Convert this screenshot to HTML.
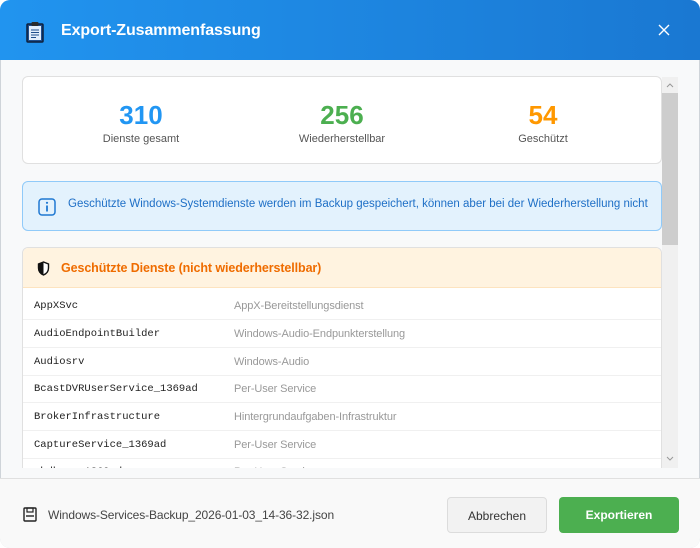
<!DOCTYPE html>
<html><head><meta charset="utf-8"><style>
*{box-sizing:border-box;margin:0;padding:0}
body{width:700px;height:548px;background:#fff;font-family:"Liberation Sans","DejaVu Sans",sans-serif;overflow:hidden}
.win{position:absolute;left:0;top:0;width:700px;height:548px;border-radius:10px;overflow:hidden;background:#f8f9fa;box-shadow:inset 0 0 0 1px #cfd4d9}
.hdr{position:absolute;left:0;top:0;width:700px;height:60px;background:linear-gradient(90deg,#2194ef,#1a78d2)}
.hdr h1{position:absolute;left:61px;top:22px;font-size:16px;font-weight:bold;color:#fff;letter-spacing:-0.1px}
.close{position:absolute;left:657px;top:23px}
.body{position:absolute;left:0;top:60px;width:700px;height:408px;overflow:hidden}
.card{position:absolute;left:22px;background:#fff;border:1px solid #e0e0e0;border-radius:6px}
.stat{position:absolute;top:23px;width:200px;text-align:center}
.stat b{display:block;font-size:26px;line-height:30px}
.stat span{display:block;font-size:11px;color:#555;margin-top:3px}
.info{position:absolute;left:22px;top:121px;width:640px;height:50px;background:#e3f2fd;border:1px solid #90caf9;border-radius:6px;overflow:hidden;white-space:nowrap}
.info span{position:absolute;left:45px;top:16px;font-size:11.5px;color:#1e6fc6;letter-spacing:0px}
.ph{position:absolute;left:0;top:0;width:640px;height:40px;background:#fff3e0;border-bottom:1px solid #fde3bf}
.ph span{position:absolute;left:38px;top:13px;font-size:12.5px;font-weight:bold;color:#ef6c00;letter-spacing:-0.1px}
.row{position:absolute;left:0;width:640px;height:28px;border-bottom:1px solid #f0f0f0}
.row .n{position:absolute;left:11px;top:8px;font-family:"Liberation Mono","DejaVu Sans Mono",monospace;font-size:10.5px;color:#222}
.row .d{position:absolute;left:211px;top:8px;font-size:11px;color:#999;letter-spacing:-0.1px}
.sb{position:absolute;left:662px;top:77px;width:16px;height:391px;background:#f0f0f0}
.foot{position:absolute;left:0;top:478px;width:700px;height:70px;background:#f9f9f9;border-top:1px solid #e0e0e0}
.fn{position:absolute;left:48px;top:29px;font-size:12px;color:#444;letter-spacing:-0.1px}
.btn{position:absolute;top:18px;height:36px;border-radius:4px;font-size:12px;text-align:center;line-height:36px}
</style></head><body><div class="win">
<div class="hdr">
<svg style="position:absolute;left:26px;top:21px" width="18" height="22" viewBox="0 0 18 22"><rect x="1" y="3" width="16" height="18" rx="1" fill="#1f4e8c" stroke="#0d1f3c" stroke-width="1.5"/><rect x="3" y="5" width="12" height="14" fill="#e3eefc"/><rect x="5.5" y="1" width="7" height="4" rx="1" fill="#2b2b2b"/><path d="M5 9h8M5 11.5h8M5 14h8M5 16.5h5" stroke="#1f4e8c" stroke-width="1"/></svg>
<h1>Export-Zusammenfassung</h1>
<svg class="close" width="14" height="14" viewBox="0 0 14 14"><path d="M2 2L12 12M12 2L2 12" stroke="#fff" stroke-width="1.4"/></svg>
</div>
<div class="body">
<div class="card" style="top:16px;width:640px;height:88px">
<div class="stat" style="left:18px"><b style="color:#2196f3">310</b><span>Dienste gesamt</span></div>
<div class="stat" style="left:219px"><b style="color:#4caf50">256</b><span>Wiederherstellbar</span></div>
<div class="stat" style="left:420px"><b style="color:#ff9800">54</b><span>Geschützt</span></div>
</div>
<div class="info"><svg style="position:absolute;left:15px;top:16px" width="18" height="18" viewBox="0 0 18 18"><rect x="1" y="1" width="16" height="16" rx="3" fill="none" stroke="#1e78d2" stroke-width="1.5"/><path d="M9 7.5v6" stroke="#1e78d2" stroke-width="1.8"/><circle cx="9" cy="4.8" r="1.1" fill="#1e78d2"/></svg><span>Geschützte Windows-Systemdienste werden im Backup gespeichert, können aber bei der Wiederherstellung nicht</span></div>
<div class="card" style="top:187px;width:640px;height:260px;overflow:hidden">
<div class="ph"><svg style="position:absolute;left:14px;top:13px" width="13" height="15" viewBox="0 0 13 15"><path d="M6.5 1L1.5 3v4c0 3.5 2.2 5.8 5 7 2.8-1.2 5-3.5 5-7V3z" fill="#fff" stroke="#111" stroke-width="1.4"/><path d="M6.5 1v13c-2.8-1.2-5-3.5-5-7V3z" fill="#111"/></svg><span>Geschützte Dienste (nicht wiederherstellbar)</span></div>
<div class="row" style="top:44px"><span class="n">AppXSvc</span><span class="d">AppX-Bereitstellungsdienst</span></div>
<div class="row" style="top:72px"><span class="n">AudioEndpointBuilder</span><span class="d">Windows-Audio-Endpunkterstellung</span></div>
<div class="row" style="top:100px"><span class="n">Audiosrv</span><span class="d">Windows-Audio</span></div>
<div class="row" style="top:127px"><span class="n">BcastDVRUserService_1369ad</span><span class="d">Per-User Service</span></div>
<div class="row" style="top:155px"><span class="n">BrokerInfrastructure</span><span class="d">Hintergrundaufgaben-Infrastruktur</span></div>
<div class="row" style="top:183px"><span class="n">CaptureService_1369ad</span><span class="d">Per-User Service</span></div>
<div class="row" style="top:210px"><span class="n">cbdhsvc_1369ad</span><span class="d">Per-User Service</span></div>
</div>
</div>
<div class="sb"><div style="position:absolute;left:0;top:16px;width:16px;height:152px;background:#cdcdcd"></div>
<svg style="position:absolute;left:4px;top:5px" width="8" height="6"><path d="M1 5L4 2L7 5" stroke="#999" fill="none"/></svg>
<svg style="position:absolute;left:4px;top:379px" width="8" height="6"><path d="M1 1L4 4L7 1" stroke="#999" fill="none"/></svg></div>
<div class="foot">
<svg style="position:absolute;left:23px;top:28px" width="14" height="15" viewBox="0 0 14 15"><rect x="1" y="1" width="12" height="13" rx="1" fill="none" stroke="#222" stroke-width="1.4"/><rect x="4" y="1" width="6" height="4" fill="none" stroke="#222" stroke-width="1.2"/><path d="M3 9h8" stroke="#222" stroke-width="1.4"/></svg>
<span class="fn">Windows-Services-Backup_2026-01-03_14-36-32.json</span>
<div class="btn" style="left:447px;width:100px;background:#f2f2f2;border:1px solid #dcdcdc;color:#333">Abbrechen</div>
<div class="btn" style="left:559px;width:120px;background:#4caf50;color:#fff;font-weight:bold">Exportieren</div>
</div>
</div></body></html>
